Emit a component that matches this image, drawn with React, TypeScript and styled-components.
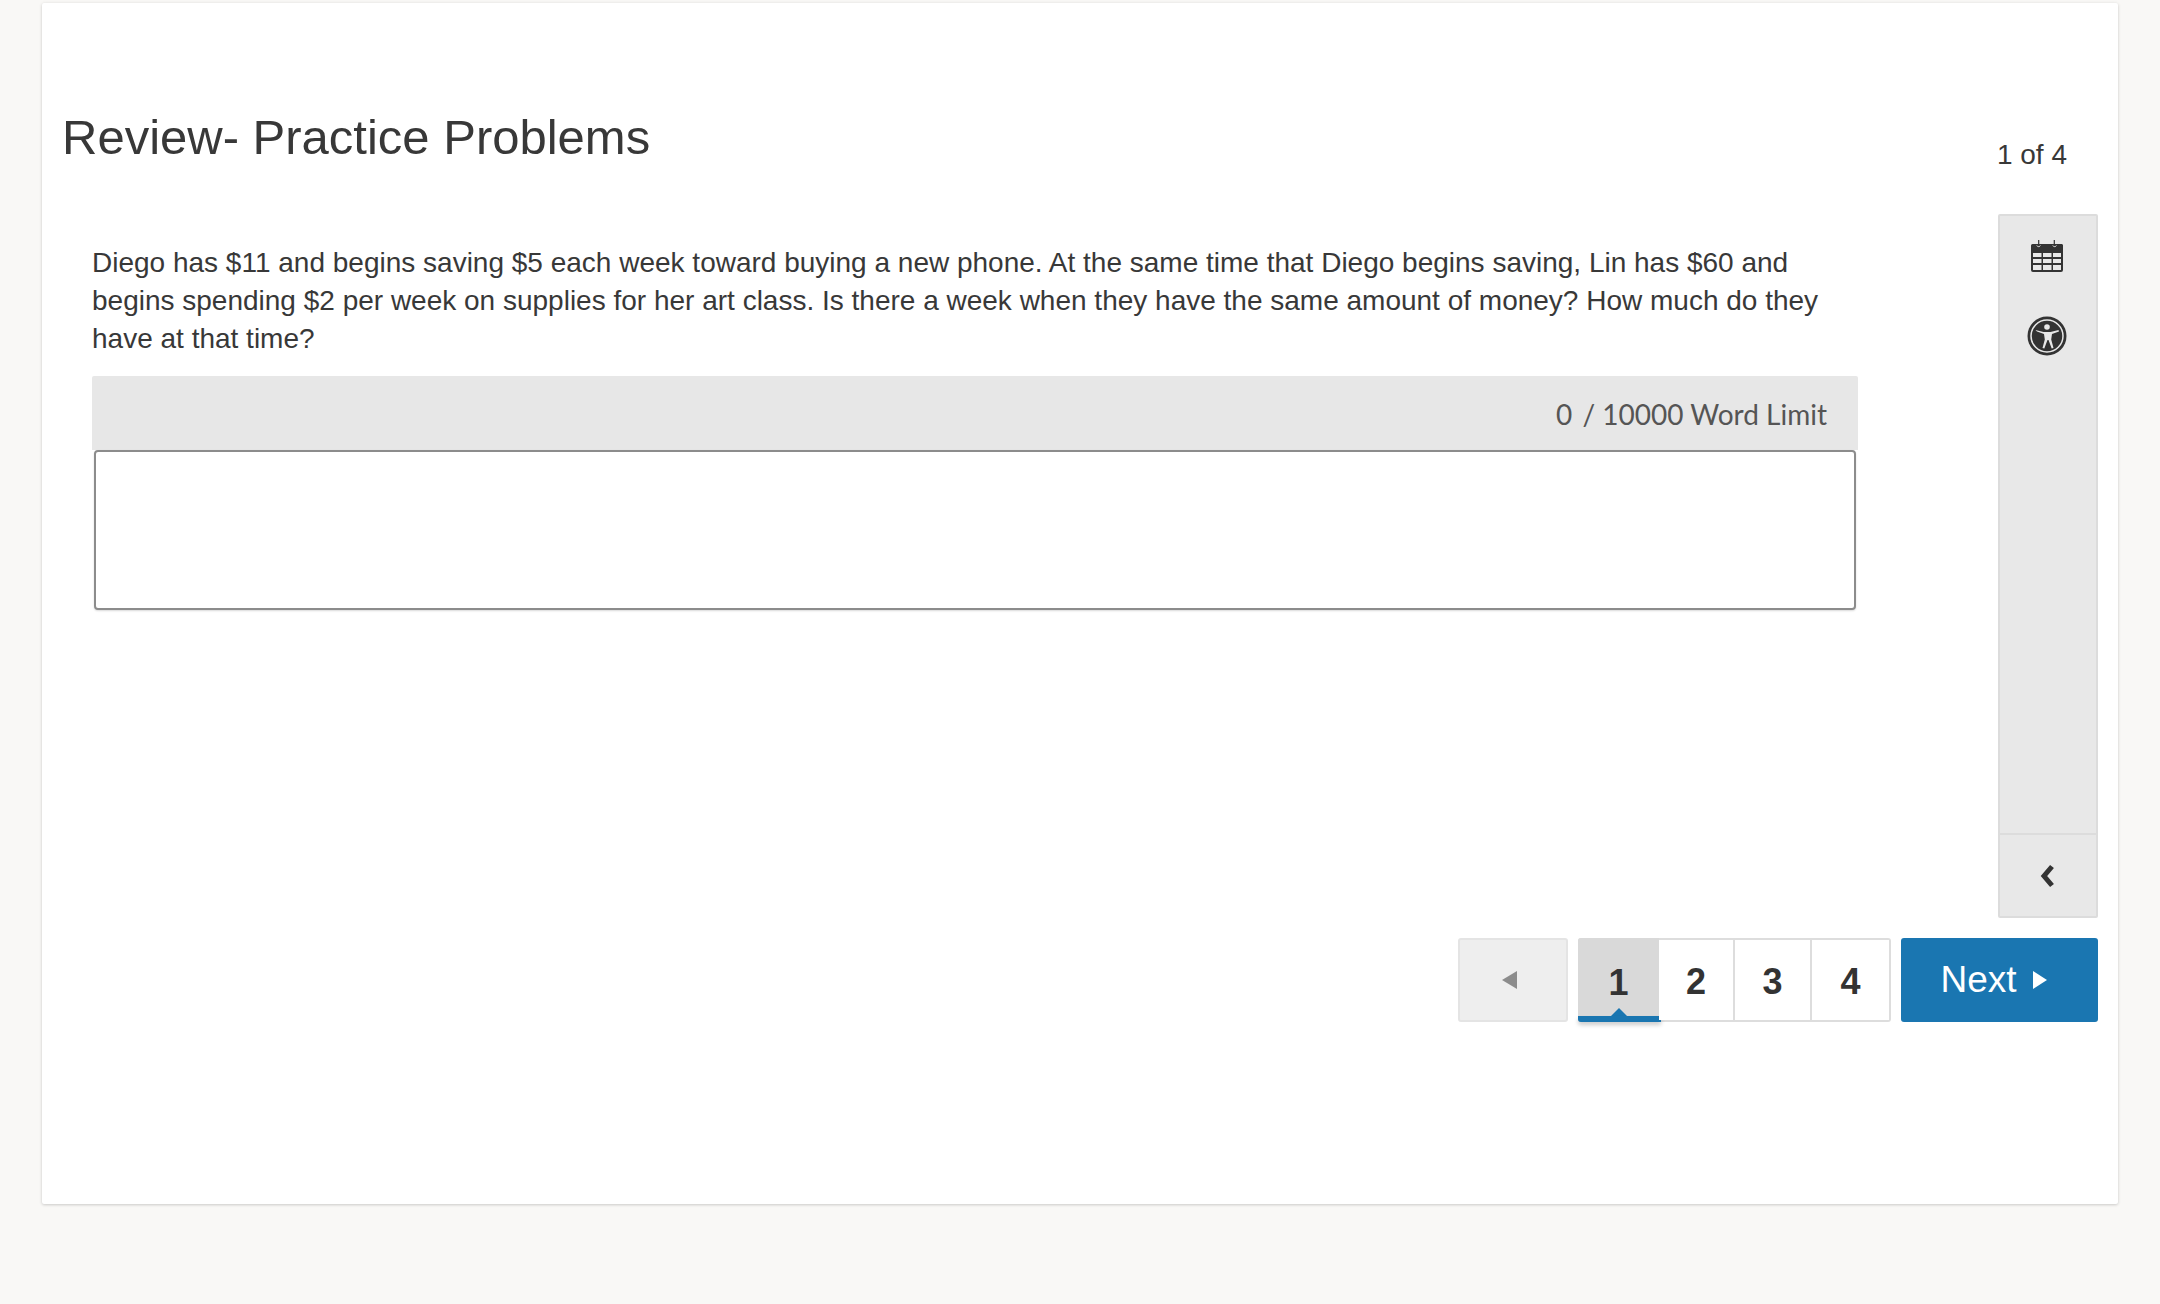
import React from 'react'
import styled, { createGlobalStyle } from 'styled-components'

const GlobalStyle = createGlobalStyle`
  html, body {
    margin: 0;
    padding: 0;
    background: #f9f8f6;
  }
  * {
    box-sizing: border-box;
  }
`

const CalendarIcon = () => (
  <svg width="34" height="33" viewBox="0 0 34 33">
    <path fill="#333" d="M2.500 5h5.600V1h1.200v4h14.400V1h1.200v4h6.100A1.500 1.500 0 0 1 33 6.500V31a2 2 0 0 1-2 2H3a2 2 0 0 1-2-2V6.500A1.500 1.500 0 0 1 2.500 5z" />
    <g fill="#e8e8e8">
      <rect x="3" y="14" width="8.500" height="4" />
      <rect x="13" y="14" width="8.500" height="4" />
      <rect x="23" y="14" width="8" height="4" />
      <rect x="3" y="20" width="8.500" height="4" />
      <rect x="13" y="20" width="8.500" height="4" />
      <rect x="23" y="20" width="8" height="4" />
      <rect x="3" y="26" width="8.500" height="5" />
      <rect x="13" y="26" width="8.500" height="5" />
      <rect x="23" y="26" width="8" height="5" />
    </g>
    <path fill="none" stroke="#e8e8e8" strokeWidth="1" d="M6.800 6.500a2 2 0 0 0 3.600 0M22.800 6.500a2 2 0 0 0 3.600 0" />
  </svg>
)

const AccessibilityIcon = () => (
  <svg width="40" height="40" viewBox="0 0 40 40">
    <circle cx="20" cy="20" r="19.500" fill="#333" />
    <circle cx="20" cy="20" r="16" fill="none" stroke="#e8e8e8" strokeWidth="1.500" />
    <circle cx="20" cy="11" r="2.800" fill="#e8e8e8" />
    <path fill="#e8e8e8" d="M8.500 14l8 2h7l8-2 .5 1.500-7 2.600-.8 5.400 2.300 8.500-1.800.6-3.200-8.600h-1l-3.200 8.600-1.800-.6 2.300-8.500-.8-5.400-7-2.600z" />
  </svg>
)

const ChevronIcon = () => (
  <svg width="16" height="24" viewBox="0 0 16 24">
    <path fill="none" stroke="#333" strokeWidth="5" d="M13 2.500L5 12l8 9.500" />
  </svg>
)

const App = () => {
  return (
    <Page>
      <GlobalStyle />
      <Card>
        <Header>
          <Title>Review- Practice Problems</Title>
          <Counter>1 of 4</Counter>
        </Header>
        <Content>
          <Main>
            <Question>
              Diego has $11 and begins saving $5 each week toward buying a new phone. At the same time that Diego begins saving, Lin has $60 and begins spending $2 per week on supplies for her art class. Is there a week when they have the same amount of money? How much do they have at that time?
            </Question>
            <Editor>
              <WordBar><WordCount>0</WordCount> / 10000 Word Limit</WordBar>
              <Answer />
            </Editor>
          </Main>
          <Rail>
            <RailTools>
              <RailButton><CalendarIcon /></RailButton>
              <RailButton><AccessibilityIcon /></RailButton>
            </RailTools>
            <RailToggle><ChevronIcon /></RailToggle>
          </Rail>
        </Content>
        <Footer>
          <PrevButton><ArrowLeft /></PrevButton>
          <Pages>
            <PageItem $wd="81px" $active>1</PageItem>
            <PageItem $wd="74px">2</PageItem>
            <PageItem $wd="77px">3</PageItem>
            <PageItem $wd="79px">4</PageItem>
          </Pages>
          <NextButton>Next<ArrowRight /></NextButton>
        </Footer>
      </Card>
    </Page>
  )
}

export default App

const Page = styled.div`
  width: 2160px;
  height: 1304px;
  padding: 3px 42px 0;
  background-color: #f9f8f6;
  font-family: 'Liberation Sans', Arial, sans-serif;
  overflow: hidden;
`

const Card = styled.div`
  width: 2076px;
  height: 1201px;
  background-color: #fff;
  border-radius: 2px;
  box-shadow: 0 1px 3px rgba(0, 0, 0, 0.16), 0 0 4px rgba(0, 0, 0, 0.05);
  padding: 0 20px 0 21px;
  display: flex;
  flex-direction: column;
`

const Header = styled.div`
  height: 211px;
  display: flex;
  justify-content: space-between;
  padding-right: 31px;
`

const Title = styled.h1`
  margin: 104px 0 0 -1px;
  font-size: 49px;
  line-height: 60px;
  font-weight: 400;
  color: #383838;
`

const Counter = styled.div`
  margin-top: 134px;
  font-size: 28px;
  line-height: 36px;
  color: #383838;
`

const Content = styled.div`
  display: flex;
  justify-content: space-between;
  height: 704px;
`

const Main = styled.div`
  width: 1795px;
  margin-left: 29px;
`

const Question = styled.div`
  width: 1766px;
  padding-top: 30px;
  font-size: 28px;
  line-height: 38px;
  color: #383838;
  height: 162px;
`

const Editor = styled.div`
  width: 1766px;
`

const WordBar = styled.div`
  height: 74px;
  background-color: #e7e7e7;
  border-radius: 2px 2px 0 0;
  font-family: Lato, sans-serif;
  font-size: 28px;
  line-height: 76px;
  color: #555;
  text-align: right;
  padding-right: 31px;
`

const WordCount = styled.span`
  margin-right: 3px;
`

const Answer = styled.div`
  width: 1762px;
  height: 160px;
  margin-left: 2px;
  background-color: #fff;
  border: 2px solid #8c8c8c;
  border-radius: 4px;
  box-shadow: 0 1px 2px rgba(0, 0, 0, 0.15);
`

const Rail = styled.div`
  width: 100px;
  background-color: #e8e8e8;
  border: 2px solid #dcdcdc;
  border-radius: 2px;
  display: flex;
  flex-direction: column;
  justify-content: space-between;
`

const RailTools = styled.div`
  display: flex;
  flex-direction: column;
  padding-top: 23px;
`

const RailButton = styled.div`
  height: 77px;
  display: flex;
  justify-content: center;
  padding-right: 2px;
  align-items: flex-start;
`

const RailToggle = styled.div`
  height: 83px;
  border-top: 2px solid #dcdcdc;
  display: flex;
  align-items: center;
  justify-content: center;
  padding-right: 2px;
`

const Footer = styled.div`
  margin-top: 20px;
  display: flex;
  justify-content: flex-end;
  gap: 10px;
`

const PrevButton = styled.div`
  width: 110px;
  height: 84px;
  background-color: #eee;
  border: 2px solid #e4e4e4;
  border-radius: 3px;
  display: flex;
  align-items: center;
  justify-content: center;
  padding-right: 2px;
`

const ArrowLeft = styled.span`
  width: 0;
  height: 0;
  border-top: 9px solid transparent;
  border-bottom: 9px solid transparent;
  border-right: 15px solid #8c8c8c;
  margin-right: 6px;
`

const Pages = styled.div`
  display: flex;
  height: 84px;
  border: 2px solid #ddd;
  border-radius: 3px;
`

const PageItem = styled.div<{ $wd: string; $active?: boolean }>`
  position: relative;
  width: ${(props) => props.$wd};
  font-size: 36px;
  font-weight: 700;
  color: #333;
  display: flex;
  align-items: center;
  justify-content: center;
  padding-top: 3px;
  background-color: ${(props) => (props.$active ? '#d9d9d9' : '#fff')};
  border-left: ${(props) => (props.$active ? 'none' : '2px solid #ddd')};
  &:nth-child(2) {
    border-left: none;
  }
  ${(props) =>
    props.$active &&
    `
    margin: -2px 0 -2px -2px;
    padding-top: 5px;
    border-radius: 3px 0 0 3px;
    &::after {
      content: '';
      position: absolute;
      left: 0;
      right: -2px;
      bottom: 0;
      height: 6px;
      background-color: #1a76b1;
      border-radius: 0 0 0 3px;
      box-shadow: 0 3px 4px rgba(0, 0, 0, 0.2);
    }
    &::before {
      content: '';
      position: absolute;
      left: 50%;
      bottom: 6px;
      margin-left: -8px;
      border-left: 8px solid transparent;
      border-right: 8px solid transparent;
      border-bottom: 8px solid #1a76b1;
    }
  `}
`

const NextButton = styled.div`
  width: 197px;
  height: 84px;
  background-color: #1a76b1;
  border-radius: 3px;
  color: #fff;
  font-size: 37px;
  display: flex;
  align-items: center;
  justify-content: center;
  gap: 16px;
  padding-right: 12px;
`

const ArrowRight = styled.span`
  width: 0;
  height: 0;
  border-top: 9px solid transparent;
  border-bottom: 9px solid transparent;
  border-left: 14px solid #fff;
`
